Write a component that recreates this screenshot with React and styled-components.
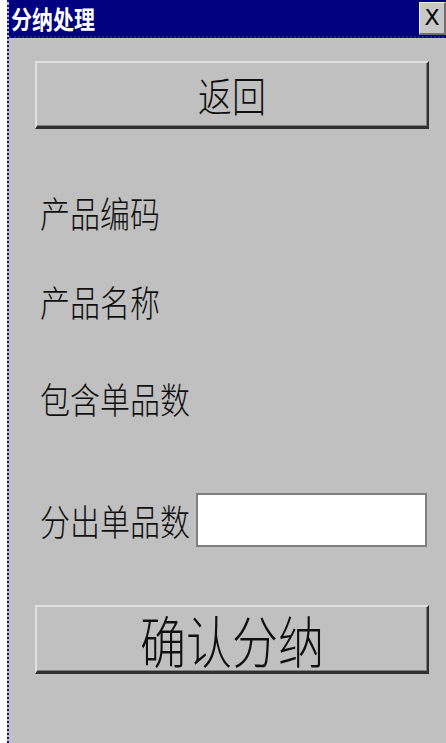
import React from "react";
import styled, { createGlobalStyle } from "styled-components";

const GlobalStyle = createGlobalStyle`
  html, body {
    margin: 0;
    padding: 0;
    background: #ffffff;
  }
  body {
    font-family: "Noto Sans CJK SC", "Noto Sans", sans-serif;
  }
`;

const FIELDS = [
  { label: "产品编码", top: 53, height: 60 },
  { label: "产品名称", top: 29, height: 60 },
  { label: "包含单品数", top: 37, height: 60, overflow: "(" },
];

export default function App() {
  return (
    <>
      <GlobalStyle />
      <Window>
        <TitleBar>
          <TitleText>分纳处理</TitleText>
          <CloseButton>X</CloseButton>
        </TitleBar>
        <Body>
          <Button $height={68} $size={34} $top={23}>
            <Stretch>返回</Stretch>
          </Button>
          {FIELDS.map((f) => (
            <Row key={f.label} $top={f.top} $height={f.height}>
              <Label>{f.label}</Label>
              {f.overflow && <Clipped>{f.overflow}</Clipped>}
            </Row>
          ))}
          <Row $top={65} $height={54}>
            <Label>分出单品数</Label>
            <Input type="text" />
          </Row>
          <Button $height={69} $size={46} $top={58}>
            <Stretch>确认分纳</Stretch>
          </Button>
        </Body>
      </Window>
    </>
  );
}

// Styled Components
const Window = styled.div`
  margin-left: 7px;
  width: 439px;
  height: 743px;
  border-left: 2px dotted #1010a0;
  background: #c0c0c0;
  display: flex;
  flex-direction: column;
  overflow: hidden;
`;

const TitleBar = styled.div`
  height: 36px;
  background: #000080;
  display: flex;
  align-items: center;
  justify-content: space-between;
  padding: 0 2px 0 2px;
  border-bottom: 2px dotted #2020a0;
`;

const TitleText = styled.span`
  display: inline-block;
  color: #ffffff;
  font-size: 21px;
  font-weight: 700;
  line-height: 1;
  transform: scaleY(1.2);
  transform-origin: left center;
`;

const CloseButton = styled.div`
  width: 27px;
  height: 33px;
  box-sizing: border-box;
  background: #c8c8c8;
  border-top: 1px solid #ececec;
  border-left: 1px solid #ececec;
  border-right: 2px solid #707070;
  border-bottom: 2px solid #707070;
  display: flex;
  align-items: center;
  justify-content: center;
  font-family: "DejaVu Sans", sans-serif;
  font-size: 22px;
  color: #000000;
`;

const Body = styled.div`
  flex: 1;
  display: flex;
  flex-direction: column;
  padding: 0 19px 0 26px;
`;

const Button = styled.div`
  margin-top: ${(p) => p.$top}px;
  height: ${(p) => p.$height}px;
  box-sizing: border-box;
  background: #c0c0c0;
  border-top: 2px solid #e0e0e0;
  border-left: 2px solid #e0e0e0;
  border-right: 2px solid #303030;
  border-bottom: 3px solid #303030;
  box-shadow: inset -1px -1px 0 #808080;
  display: flex;
  align-items: center;
  justify-content: center;
  font-size: ${(p) => p.$size}px;
  font-weight: 300;
  color: #101010;
  line-height: 1;
`;

const Stretch = styled.span`
  display: inline-block;
  transform: scaleY(1.2);
`;

const Row = styled.div`
  margin-top: ${(p) => p.$top}px;
  height: ${(p) => p.$height}px;
  display: flex;
  align-items: center;
  padding-left: 5px;
`;

const Label = styled.span`
  display: inline-block;
  font-size: 30px;
  font-weight: 300;
  color: #101010;
  line-height: 1;
  transform: scaleY(1.2);
`;

const Clipped = styled.span`
  margin-left: auto;
  margin-right: -24px;
  margin-top: 50px;
  font-size: 14px;
  color: #202020;
`;

const Input = styled.input`
  margin-left: 6px;
  width: 231px;
  height: 54px;
  box-sizing: border-box;
  background: #ffffff;
  border: 2px solid #808080;
  outline: none;
`;
